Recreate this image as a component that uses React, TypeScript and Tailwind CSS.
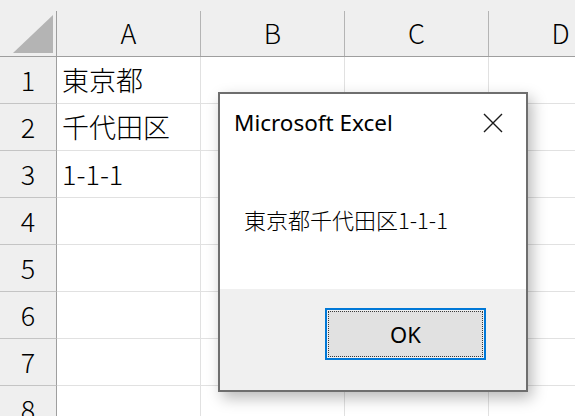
import React from 'react';

const cols = ['A', 'B', 'C', 'D'];
const rows: string[][] = [
  ['東京都'],
  ['千代田区'],
  ['1-1-1'],
  [],
  [],
  [],
  [],
  [],
];

const jp = "font-['Noto_Sans_CJK_JP',sans-serif] font-light";

const App: React.FC = () => {
  return (
    <div className="relative w-[575px] h-[416px] overflow-hidden bg-white text-black">
      {/* Column headers */}
      <div className="flex h-[57px] bg-[#efefef] border-b border-[#9e9e9e]">
        <div className="w-[57px] shrink-0 border-r border-[#9e9e9e] mt-[11px] flex items-end justify-end pr-[3px] pb-[3px]">
          <svg width="40" height="38" viewBox="0 0 40 38">
            <polygon points="40,0 40,38 0,38" fill="#b4b4b4" />
          </svg>
        </div>
        {cols.map((c) => (
          <div
            key={c}
            className={`w-[144px] shrink-0 mt-[11px] border-r border-[#b4b4b4] flex items-center justify-center text-[27px] ${jp}`}
          >
            {c}
          </div>
        ))}
      </div>

      {/* Rows */}
      {rows.map((r, i) => (
        <div key={i} className="flex h-[47px]">
          <div
            className={`w-[57px] shrink-0 bg-[#efefef] border-r border-b border-r-[#9e9e9e] border-b-[#c4c4c4] flex items-center justify-center text-[27px] ${jp}`}
          >
            {i + 1}
          </div>
          {cols.map((c, j) => (
            <div
              key={c}
              className={`w-[144px] shrink-0 border-r border-b border-[#e1e1e1] flex items-center pl-[5px] text-[27px] whitespace-nowrap ${jp}`}
            >
              {r[j] ?? ''}
            </div>
          ))}
        </div>
      ))}

      {/* Message box */}
      <div className="absolute left-[218px] top-[92px] w-[310px] h-[300px] border-2 border-[#6e6e6e] bg-white flex flex-col shadow-[4px_6px_14px_rgba(0,0,0,0.28)]">
        <div className="flex-1 flex flex-col">
          <div className="flex items-center justify-between h-[58px] pl-[14px] pr-[23px]">
            <span className="text-[22.5px] font-['Noto_Sans','Noto_Sans_CJK_JP',sans-serif]">Microsoft Excel</span>
            <svg width="20" height="20" viewBox="0 0 20 20">
              <path d="M1 1 L19 19 M19 1 L1 19" stroke="#1a1a1a" strokeWidth="1.4" fill="none" />
            </svg>
          </div>
          <div className={`pl-[24px] pt-[51px] text-[22px] ${jp}`}>東京都千代田区1-1-1</div>
        </div>
        <div className="h-[101px] bg-[#f0f0f0] flex justify-end pr-[40px] pt-[19px]">
          <div className="w-[161px] h-[52px] border-2 border-[#0078d7] p-px">
            <div className="w-full h-full border border-dotted border-[#3a3a3a] bg-[#e1e1e1] flex items-center justify-center text-[22px] font-['Noto_Sans',sans-serif]">
              OK
            </div>
          </div>
        </div>
      </div>
    </div>
  );
};

export default App;
